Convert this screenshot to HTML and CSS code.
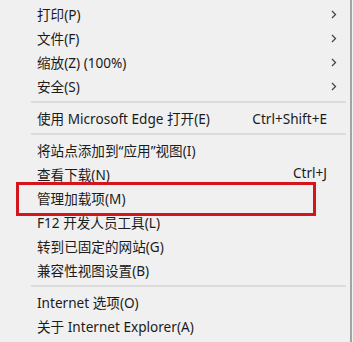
FILE: index.html
```html
<!DOCTYPE html>
<html>
<head>
<meta charset="utf-8">
<link rel="stylesheet" href="styles.css">
</head>
<body>
<div class="menu">
  <div class="item"><span class="label">打印(P)</span><svg class="arrow" width="6" height="9" viewBox="0 0 6 9"><path d="M1 1 L4.5 4.5 L1 8" fill="none" stroke="#444" stroke-width="1.3"/></svg></div>
  <div class="item"><span class="label">文件(F)</span><svg class="arrow" width="6" height="9" viewBox="0 0 6 9"><path d="M1 1 L4.5 4.5 L1 8" fill="none" stroke="#444" stroke-width="1.3"/></svg></div>
  <div class="item"><span class="label">缩放(Z) (100%)</span><svg class="arrow" width="6" height="9" viewBox="0 0 6 9"><path d="M1 1 L4.5 4.5 L1 8" fill="none" stroke="#444" stroke-width="1.3"/></svg></div>
  <div class="item"><span class="label">安全(S)</span><svg class="arrow" width="6" height="9" viewBox="0 0 6 9"><path d="M1 1 L4.5 4.5 L1 8" fill="none" stroke="#444" stroke-width="1.3"/></svg></div>
  <div class="sep"></div>
  <div class="item"><span class="label">使用 Microsoft Edge 打开(E)</span><span class="key">Ctrl+Shift+E</span></div>
  <div class="sep"></div>
  <div class="item"><span class="label">将站点添加到“应用”视图(I)</span></div>
  <div class="item"><span class="label">查看下载(N)</span><span class="key up">Ctrl+J</span></div>
  <div class="item"><span class="label">管理加载项(M)</span></div>
  <div class="item"><span class="label">F12 开发人员工具(L)</span></div>
  <div class="item"><span class="label">转到已固定的网站(G)</span></div>
  <div class="item"><span class="label">兼容性视图设置(B)</span></div>
  <div class="sep"></div>
  <div class="item"><span class="label">Internet 选项(O)</span></div>
  <div class="item"><span class="label">关于 Internet Explorer(A)</span></div>
  <div class="highlight"></div>
</div>
</body>
</html>
```
FILE: styles.css
```css
html, body {
  margin: 0;
  padding: 0;
  background: #f0f0f0;
}
.menu {
  position: relative;
  width: 352px;
  height: 342px;
  box-sizing: border-box;
  padding-top: 2px;
  border-right: 2px solid #a3a3a3;
  background: #f0f0f0;
  font-family: "Noto Sans", "Noto Sans CJK SC", sans-serif;
  font-size: 13.6px;
  color: #1b1b1b;
}
.item {
  display: flex;
  align-items: center;
  height: 24px;
  padding-left: 37px;
  padding-right: 23px;
  white-space: nowrap;
}
.label {
  flex: 1;
}
.key.up {
  position: relative;
  top: -2px;
}
.arrow {
  margin-right: -10px;
  display: block;
}
.sep {
  height: 8px;
  display: flex;
  align-items: center;
  margin-left: 31px;
  margin-right: 4px;
}
.sep::before {
  content: "";
  display: block;
  width: 100%;
  height: 2px;
  background: #dcdcdc;
}
.highlight {
  position: absolute;
  left: 16px;
  top: 182px;
  width: 300px;
  height: 34px;
  box-sizing: border-box;
  border: 3px solid #d4161c;
}
```
